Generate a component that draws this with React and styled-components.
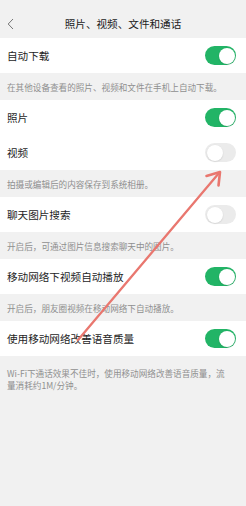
import React from "react";
import styled, { createGlobalStyle } from "styled-components";

const Global = createGlobalStyle`
  html, body { margin: 0; padding: 0; background: #f1f1f1; }
  body { font-family: "Noto Sans CJK SC", "Noto Sans", sans-serif; }
  * { box-sizing: border-box; }
`;

const Page = styled.div`
  position: relative;
  width: 246px;
  min-height: 506px;
  background: #f1f1f1;
  overflow: hidden;
`;

const Header = styled.div`
  height: 38px;
  padding-top: 10px;
  display: grid;
  grid-template-columns: 30px 1fr 30px;
  align-items: center;
`;

const Back = styled.div`
  height: 28px;
  display: flex;
  align-items: center;
  padding-left: 7px;
`;

const Title = styled.div`
  text-align: center;
  font-size: 10.6px;
  color: #1b1b1b;
  line-height: 28px;
`;

const Row = styled.div`
  height: 35px;
  background: #fff;
  display: flex;
  align-items: center;
  justify-content: space-between;
  padding: 0 10px 0 7px;
`;

const Label = styled.span`
  font-size: 10.6px;
  color: #1e1e1e;
`;

const Desc = styled.div`
  padding: ${(p) => (p.$multi ? "11px 10px 8px 7px" : "7.5px 10px 7.5px 7px")};
  font-size: 8.6px;
  line-height: 12px;
  color: #8f8f8f;
  white-space: pre-line;
`;

const Track = styled.div`
  position: relative;
  width: 31px;
  height: 19px;
  border-radius: 10px;
  background: ${(p) => (p.$on ? "#22b466" : "#ebebeb")};
`;

const Knob = styled.div`
  position: absolute;
  top: 1.5px;
  left: ${(p) => (p.$on ? "13.5px" : "1.5px")};
  width: 16px;
  height: 16px;
  border-radius: 50%;
  background: #fff;
  box-shadow: 0 0.5px 1.5px rgba(0, 0, 0, 0.15);
`;

const Overlay = styled.svg`
  position: absolute;
  left: 0;
  top: 0;
  pointer-events: none;
`;

const Toggle = ({ on }) => (
  <Track $on={on}>
    <Knob $on={on} />
  </Track>
);

const Item = ({ label, on }) => (
  <Row>
    <Label>{label}</Label>
    <Toggle on={on} />
  </Row>
);

export default function App() {
  return (
    <Page>
      <Global />
      <Header>
        <Back>
          <svg width="7" height="12" viewBox="0 0 7 12">
            <path d="M6 1 L1.2 6 L6 11" fill="none" stroke="#666" strokeWidth="0.9" />
          </svg>
        </Back>
        <Title>照片、视频、文件和通话</Title>
        <span />
      </Header>
      <Item label="自动下载" on />
      <Desc>在其他设备查看的照片、视频和文件在手机上自动下载。</Desc>
      <Item label="照片" on />
      <Item label="视频" on={false} />
      <Desc>拍摄或编辑后的内容保存到系统相册。</Desc>
      <Item label="聊天图片搜索" on={false} />
      <Desc>开启后，可通过图片信息搜索聊天中的图片。</Desc>
      <Item label="移动网络下视频自动播放" on />
      <Desc>开启后，朋友圈视频在移动网络下自动播放。</Desc>
      <Item label="使用移动网络改善语音质量" on />
      <Desc $multi>{"Wi-Fi下通话效果不佳时，使用移动网络改善语音质量，流\n量消耗约1M/分钟。"}</Desc>
      <Overlay width="246" height="506" viewBox="0 0 246 506">
        <g stroke="#e9776f" strokeWidth="2.3" strokeLinecap="round" fill="none">
          <line x1="78" y1="340" x2="219" y2="173" />
          <polyline points="206.5,176 220,172 218.5,185.5" strokeLinejoin="round" strokeWidth="2.6" />
        </g>
      </Overlay>
    </Page>
  );
}
